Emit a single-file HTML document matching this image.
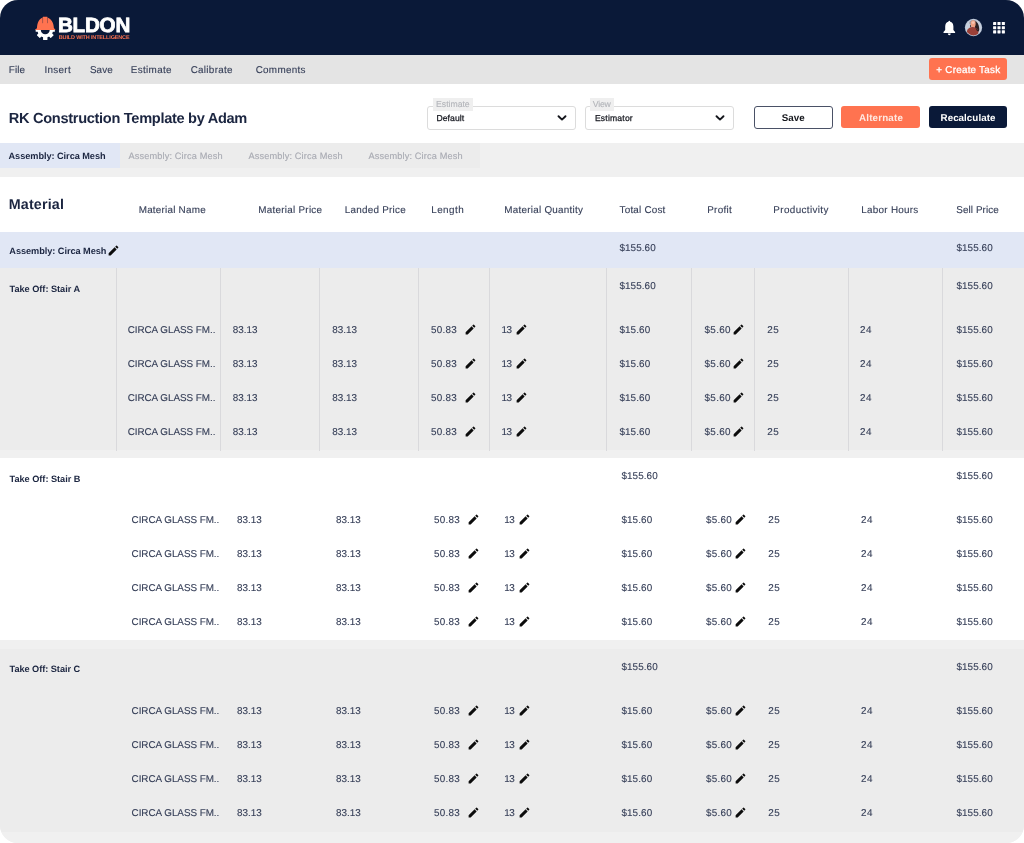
<!DOCTYPE html>
<html lang="en">
<head>
<meta charset="utf-8">
<title>BLDON - RK Construction Template by Adam</title>
<style>

html,body{margin:0;padding:0;background:#fff;}
body{width:1024px;height:843px;overflow:hidden;position:relative;font-family:"Liberation Sans",Arial,Helvetica,sans-serif;}
#app{will-change:transform;position:absolute;left:0;top:0;width:1024px;height:843px;overflow:hidden;border-radius:18px;background:#f0f0f0;}
.b{position:absolute;}
.t{position:absolute;white-space:nowrap;line-height:12px;height:12px;margin:0;padding:0;text-rendering:geometricPrecision;transform-origin:0 0;}
.pc{position:absolute;width:13px;height:13px;}
.vl{position:absolute;width:1px;background:#d9d9dc;top:268px;height:183px;}

</style>
</head>
<body>
<div id="app">
<header class="topbar">
<div class="b" style="left:0;top:0;width:1024px;height:55px;background:#0a1938"></div>
<svg class="b" style="left:34px;top:16px" width="23" height="26" viewBox="0 0 23 26">
<g fill="#ffffff"><circle cx="11.25" cy="13.6" r="7.9"/>
<g transform="translate(11.25 13.6)">
<rect x="-2.2" y="-10.4" width="4.4" height="20.8" rx="0.5"/>
<rect x="-2.2" y="-9.9" width="4.4" height="19.8" rx="0.5" transform="rotate(45)"/>
<rect x="-2.2" y="-9.6" width="4.4" height="19.2" rx="0.5" transform="rotate(90)"/>
<rect x="-2.2" y="-9.9" width="4.4" height="19.8" rx="0.5" transform="rotate(135)"/>
</g></g>
<circle cx="11.25" cy="13.7" r="4.5" fill="#0a1938"/>
<rect x="0" y="0" width="23" height="13.6" fill="#0a1938"/>
<path d="M1.4 13.9 L1.4 13.2 L3 12.3 C3 6.2 5.6 2.6 8.9 1.5 L8.9 0.8 L13.3 0.8 L13.3 1.5 C16.6 2.6 19.9 6.2 19.9 12.3 L21.2 13.2 L21.2 13.9 Z" fill="#ff7350"/>
<path d="M8.6 2 L8.6 7.2 M13.5 1.8 L13.5 7.2" stroke="#0a1938" stroke-width="0.45" fill="none" opacity="0.75"/>
</svg>
<svg class="b" style="left:942px;top:20px" width="15" height="16" viewBox="0 0 15 16">
<path d="M7.3 0.8 C7.9 0.8 8.2 1.2 8.2 1.8 C10.2 2.3 11.4 4 11.4 6.4 L11.4 10 L13.1 12 L13.1 12.9 L1.5 12.9 L1.5 12 L3.2 10 L3.2 6.4 C3.2 4 4.4 2.3 6.4 1.8 C6.4 1.2 6.7 0.8 7.3 0.8 Z" fill="#ffffff"/>
<path d="M5.9 13.6 L8.7 13.6 C8.7 14.6 8.1 15.2 7.3 15.2 C6.5 15.2 5.9 14.6 5.9 13.6 Z" fill="#ffffff"/></svg>
<svg class="b" style="left:963.95px;top:18.2px" width="19" height="19" viewBox="0 0 19 19">
<defs><clipPath id="av"><circle cx="9.5" cy="9.5" r="7.9"/></clipPath></defs>
<circle cx="9.5" cy="9.5" r="8.65" fill="#b7c2d4"/>
<g clip-path="url(#av)">
<rect x="0" y="0" width="19" height="19" fill="#c6cfdd"/>
<path d="M5.2 5.2 C5.6 3.2 7.2 2 9.4 2 C11.6 2 12.8 3 13.4 4.6 L12 6 L6.4 6.4 Z" fill="#7d6a68" opacity="0.55"/>
<path d="M10.8 3.2 C13.4 3.6 14.6 6 15 9 C15.3 11 15.6 12.4 14.6 13.4 L11.4 12 L10.6 8 Z" fill="#2b2023"/>
<path d="M6.2 6.6 C5.8 7.6 6 8.6 6.6 9.2 L7.4 8.4 Z" fill="#2b2023"/>
<ellipse cx="9.2" cy="5.8" rx="2.45" ry="3.5" fill="#f1a283"/>
<ellipse cx="9.1" cy="4.6" rx="1.5" ry="1.4" fill="#f7cdbd" opacity="0.8"/>
<path d="M2.6 18 L2.9 13.2 C3.2 10.6 5.8 9.3 8.4 9.1 C11.2 9 13.9 10.4 14.3 13.2 L14.6 18 Z" fill="#9b4038"/>
<path d="M11.2 9.4 C12.6 10.4 13.8 11.6 14.5 13.6 L13 13 Z" fill="#2b2023"/>
</g></svg>
<svg class="b" style="left:993px;top:22px" width="13" height="13" viewBox="0 0 13 13"><rect x="0.10" y="0.00" width="3.1" height="3.1" rx="0.4" fill="#ffffff"/><rect x="4.45" y="0.00" width="3.1" height="3.1" rx="0.4" fill="#ffffff"/><rect x="8.80" y="0.00" width="3.1" height="3.1" rx="0.4" fill="#ffffff"/><rect x="0.10" y="4.15" width="3.1" height="3.1" rx="0.4" fill="#ffffff"/><rect x="4.45" y="4.15" width="3.1" height="3.1" rx="0.4" fill="#ffffff"/><rect x="8.80" y="4.15" width="3.1" height="3.1" rx="0.4" fill="#ffffff"/><rect x="0.10" y="8.30" width="3.1" height="3.1" rx="0.4" fill="#ffffff"/><rect x="4.45" y="8.30" width="3.1" height="3.1" rx="0.4" fill="#ffffff"/><rect x="8.80" y="8.30" width="3.1" height="3.1" rx="0.4" fill="#ffffff"/></svg>
<span class="t" id="t0" style="left:57.94px;top:20px;font-size:20.6px;color:#ffffff;-webkit-text-stroke:0.8px #ffffff;font-weight:700;letter-spacing:-0.225px;">BLDON</span>
<span class="t" id="t1" style="left:58.79px;top:32px;font-size:5.5px;color:#ff7350;font-weight:700;letter-spacing:-0.157px;">BUILD WITH INTELLIGENCE</span>
</header>
<nav class="menubar">
<div class="b" style="left:0;top:55px;width:1024px;height:28.5px;background:#e4e4e4"></div>
<div class="b" style="left:929px;top:58.3px;width:78.3px;height:22.2px;border-radius:3px;background:#ff7350"></div>
<span class="t" id="t2" style="left:8.85px;top:65px;font-size:9.9px;color:#363f58;-webkit-text-stroke:0.12px #363f58;letter-spacing:0.100px;">File</span>
<span class="t" id="t3" style="left:44.44px;top:65px;font-size:9.9px;color:#363f58;-webkit-text-stroke:0.12px #363f58;letter-spacing:0.300px;">Insert</span>
<span class="t" id="t4" style="left:89.94px;top:65px;font-size:9.9px;color:#363f58;-webkit-text-stroke:0.12px #363f58;letter-spacing:0.083px;">Save</span>
<span class="t" id="t5" style="left:130.69px;top:65px;font-size:9.9px;color:#363f58;-webkit-text-stroke:0.12px #363f58;letter-spacing:0.357px;">Estimate</span>
<span class="t" id="t6" style="left:190.64px;top:65px;font-size:9.9px;color:#363f58;-webkit-text-stroke:0.12px #363f58;letter-spacing:0.300px;">Calibrate</span>
<span class="t" id="t7" style="left:255.64px;top:65px;font-size:9.9px;color:#363f58;-webkit-text-stroke:0.12px #363f58;letter-spacing:0.307px;">Comments</span>
<span class="t" id="t8" style="left:936.35px;top:65px;font-size:9.9px;color:#ffffff;-webkit-text-stroke:0.3px #ffffff;letter-spacing:0.229px;">+ Create Task</span>
</nav>
<section class="toolbar">
<div class="b" style="left:0;top:83.5px;width:1024px;height:59.5px;background:#ffffff"></div>
<div class="b" style="left:427px;top:106px;width:147px;height:21.5px;border:1px solid #dcdcdc;border-radius:3px;background:#fff"></div>
<div class="b" style="left:585px;top:106px;width:147px;height:21.5px;border:1px solid #dcdcdc;border-radius:3px;background:#fff"></div>
<div class="b" style="left:433px;top:98px;width:40px;height:13px;background:#efefef"></div>
<div class="b" style="left:590px;top:98px;width:24px;height:13px;background:#efefef"></div>
<div class="b" style="left:753.8px;top:106px;width:77.1px;height:20.8px;border:1px solid #4a5166;border-radius:3px;background:#fff"></div>
<div class="b" style="left:841.2px;top:106px;width:79px;height:22.3px;border-radius:3px;background:#ff7350"></div>
<div class="b" style="left:928.7px;top:106px;width:78.6px;height:22.3px;border-radius:3px;background:#0a1938"></div>
<svg class="b" style="left:557px;top:113px" width="10" height="10" viewBox="0 0 10 10"><path d="M1.5 3.2 L5 6.6 L8.5 3.2" fill="none" stroke="#14161c" stroke-width="1.9" stroke-linecap="round" stroke-linejoin="round"/></svg>
<svg class="b" style="left:715px;top:113px" width="10" height="10" viewBox="0 0 10 10"><path d="M1.5 3.2 L5 6.6 L8.5 3.2" fill="none" stroke="#14161c" stroke-width="1.9" stroke-linecap="round" stroke-linejoin="round"/></svg>
<span class="t" id="t9" style="left:8.75px;top:113px;font-size:14.6px;color:#1b2540;font-weight:700;letter-spacing:-0.308px;">RK Construction Template by Adam</span>
<span class="t" id="t10" style="left:436.10px;top:98px;font-size:8.7px;color:#b3b5ba;-webkit-text-stroke:0.12px #b3b5ba;letter-spacing:-0.029px;">Estimate</span>
<span class="t" id="t11" style="left:436.44px;top:112px;font-size:8.6px;color:#14161e;-webkit-text-stroke:0.25px #14161e;letter-spacing:0.083px;">Default</span>
<span class="t" id="t12" style="left:592.64px;top:98px;font-size:8.7px;color:#b3b5ba;-webkit-text-stroke:0.12px #b3b5ba;letter-spacing:-0.133px;">View</span>
<span class="t" id="t13" style="left:594.94px;top:112px;font-size:8.6px;color:#14161e;-webkit-text-stroke:0.25px #14161e;letter-spacing:0.188px;">Estimator</span>
<span class="t" id="t14" style="left:781.64px;top:113px;font-size:9.8px;color:#14161c;font-weight:700;letter-spacing:0.083px;">Save</span>
<span class="t" id="t15" style="left:859.00px;top:113px;font-size:9.8px;color:#ffe9e2;font-weight:700;letter-spacing:0.175px;">Alternate</span>
<span class="t" id="t16" style="left:940.54px;top:113px;font-size:9.8px;color:#ffffff;font-weight:700;letter-spacing:0.040px;">Recalculate</span>
</section>
<nav class="tabs">
<div class="b" style="left:0;top:143px;width:1024px;height:34px;background:#f0f0f0"></div>
<div class="b" style="left:0;top:143px;width:480px;height:25px;background:#ececec"></div>
<div class="b" style="left:0;top:143px;width:120px;height:25px;background:#e1e7f5"></div>
<span class="t" id="t17" style="left:8.50px;top:150px;font-size:9.2px;color:#1b2540;font-weight:700;letter-spacing:-0.050px;">Assembly: Circa Mesh</span>
<span class="t" id="t18" style="left:128.54px;top:150px;font-size:9.2px;color:#a8aab2;-webkit-text-stroke:0.12px #a8aab2;letter-spacing:0.137px;">Assembly: Circa Mesh</span>
<span class="t" id="t19" style="left:248.54px;top:150px;font-size:9.2px;color:#a8aab2;-webkit-text-stroke:0.12px #a8aab2;letter-spacing:0.137px;">Assembly: Circa Mesh</span>
<span class="t" id="t20" style="left:368.54px;top:150px;font-size:9.2px;color:#a8aab2;-webkit-text-stroke:0.12px #a8aab2;letter-spacing:0.137px;">Assembly: Circa Mesh</span>
</nav>
<main class="estimate-table">
<div class="thead">
<div class="b" style="left:0;top:177px;width:1024px;height:55px;background:#ffffff"></div>
<span class="t" id="t21" style="left:8.79px;top:199px;font-size:14.3px;color:#1b2540;font-weight:700;letter-spacing:0.150px;">Material</span>
<span class="t" id="t22" style="left:138.69px;top:205px;font-size:9.9px;color:#363f58;-webkit-text-stroke:0.12px #363f58;letter-spacing:0.229px;">Material Name</span>
<span class="t" id="t23" style="left:258.19px;top:205px;font-size:9.9px;color:#363f58;-webkit-text-stroke:0.12px #363f58;letter-spacing:0.269px;">Material Price</span>
<span class="t" id="t24" style="left:344.69px;top:205px;font-size:9.9px;color:#363f58;-webkit-text-stroke:0.12px #363f58;letter-spacing:0.250px;">Landed Price</span>
<span class="t" id="t25" style="left:431.19px;top:205px;font-size:9.9px;color:#363f58;-webkit-text-stroke:0.12px #363f58;letter-spacing:0.460px;">Length</span>
<span class="t" id="t26" style="left:504.35px;top:205px;font-size:9.9px;color:#363f58;-webkit-text-stroke:0.12px #363f58;letter-spacing:0.244px;">Material Quantity</span>
<span class="t" id="t27" style="left:619.54px;top:205px;font-size:9.9px;color:#363f58;-webkit-text-stroke:0.12px #363f58;letter-spacing:0.211px;">Total Cost</span>
<span class="t" id="t28" style="left:707.19px;top:205px;font-size:9.9px;color:#363f58;-webkit-text-stroke:0.12px #363f58;letter-spacing:0.300px;">Profit</span>
<span class="t" id="t29" style="left:773.35px;top:205px;font-size:9.9px;color:#363f58;-webkit-text-stroke:0.12px #363f58;letter-spacing:0.364px;">Productivity</span>
<span class="t" id="t30" style="left:861.35px;top:205px;font-size:9.9px;color:#363f58;-webkit-text-stroke:0.12px #363f58;letter-spacing:0.260px;">Labor Hours</span>
<span class="t" id="t31" style="left:956.29px;top:205px;font-size:9.9px;color:#363f58;-webkit-text-stroke:0.12px #363f58;letter-spacing:0.078px;">Sell Price</span>
</div>
<div class="assembly-row">
<div class="b" style="left:0;top:232px;width:1024px;height:36px;background:#e1e7f5"></div>
<svg class="pc" style="left:107.3px;top:243.7px" viewBox="0 0 24 24"><path fill="#0c0c0c" d="M3 17.25V21h3.75L17.81 9.94l-3.75-3.75L3 17.25zM20.71 7.04a.996.996 0 0 0 0-1.41l-2.34-2.34a.996.996 0 0 0-1.41 0l-1.83 1.83 3.75 3.75 1.83-1.83z"/></svg>
<span class="t" id="t32" style="left:9.30px;top:245px;font-size:9.2px;color:#1b2540;font-weight:700;letter-spacing:-0.050px;">Assembly: Circa Mesh</span>
<span class="t" id="t33" style="left:619.44px;top:243px;font-size:9.9px;color:#363f58;-webkit-text-stroke:0.12px #363f58;letter-spacing:0.083px;">$155.60</span>
<span class="t" id="t34" style="left:956.44px;top:243px;font-size:9.9px;color:#363f58;-webkit-text-stroke:0.12px #363f58;letter-spacing:0.083px;">$155.60</span>
</div>
<section class="takeoff stair-a">
<div class="b" style="left:0;top:268px;width:1024px;height:182px;background:#ececec"></div>
<div class="vl" style="left:116.0px"></div>
<div class="vl" style="left:220.0px"></div>
<div class="vl" style="left:319.0px"></div>
<div class="vl" style="left:418.0px"></div>
<div class="vl" style="left:489.0px"></div>
<div class="vl" style="left:606.0px"></div>
<div class="vl" style="left:691.0px"></div>
<div class="vl" style="left:754.0px"></div>
<div class="vl" style="left:848.0px"></div>
<div class="vl" style="left:942.0px"></div>
<svg class="pc" style="left:463.8px;top:322.8px" viewBox="0 0 24 24"><path fill="#0c0c0c" d="M3 17.25V21h3.75L17.81 9.94l-3.75-3.75L3 17.25zM20.71 7.04a.996.996 0 0 0 0-1.41l-2.34-2.34a.996.996 0 0 0-1.41 0l-1.83 1.83 3.75 3.75 1.83-1.83z"/></svg>
<svg class="pc" style="left:514.8px;top:322.8px" viewBox="0 0 24 24"><path fill="#0c0c0c" d="M3 17.25V21h3.75L17.81 9.94l-3.75-3.75L3 17.25zM20.71 7.04a.996.996 0 0 0 0-1.41l-2.34-2.34a.996.996 0 0 0-1.41 0l-1.83 1.83 3.75 3.75 1.83-1.83z"/></svg>
<svg class="pc" style="left:732.4px;top:322.8px" viewBox="0 0 24 24"><path fill="#0c0c0c" d="M3 17.25V21h3.75L17.81 9.94l-3.75-3.75L3 17.25zM20.71 7.04a.996.996 0 0 0 0-1.41l-2.34-2.34a.996.996 0 0 0-1.41 0l-1.83 1.83 3.75 3.75 1.83-1.83z"/></svg>
<svg class="pc" style="left:463.8px;top:356.8px" viewBox="0 0 24 24"><path fill="#0c0c0c" d="M3 17.25V21h3.75L17.81 9.94l-3.75-3.75L3 17.25zM20.71 7.04a.996.996 0 0 0 0-1.41l-2.34-2.34a.996.996 0 0 0-1.41 0l-1.83 1.83 3.75 3.75 1.83-1.83z"/></svg>
<svg class="pc" style="left:514.8px;top:356.8px" viewBox="0 0 24 24"><path fill="#0c0c0c" d="M3 17.25V21h3.75L17.81 9.94l-3.75-3.75L3 17.25zM20.71 7.04a.996.996 0 0 0 0-1.41l-2.34-2.34a.996.996 0 0 0-1.41 0l-1.83 1.83 3.75 3.75 1.83-1.83z"/></svg>
<svg class="pc" style="left:732.4px;top:356.8px" viewBox="0 0 24 24"><path fill="#0c0c0c" d="M3 17.25V21h3.75L17.81 9.94l-3.75-3.75L3 17.25zM20.71 7.04a.996.996 0 0 0 0-1.41l-2.34-2.34a.996.996 0 0 0-1.41 0l-1.83 1.83 3.75 3.75 1.83-1.83z"/></svg>
<svg class="pc" style="left:463.8px;top:390.8px" viewBox="0 0 24 24"><path fill="#0c0c0c" d="M3 17.25V21h3.75L17.81 9.94l-3.75-3.75L3 17.25zM20.71 7.04a.996.996 0 0 0 0-1.41l-2.34-2.34a.996.996 0 0 0-1.41 0l-1.83 1.83 3.75 3.75 1.83-1.83z"/></svg>
<svg class="pc" style="left:514.8px;top:390.8px" viewBox="0 0 24 24"><path fill="#0c0c0c" d="M3 17.25V21h3.75L17.81 9.94l-3.75-3.75L3 17.25zM20.71 7.04a.996.996 0 0 0 0-1.41l-2.34-2.34a.996.996 0 0 0-1.41 0l-1.83 1.83 3.75 3.75 1.83-1.83z"/></svg>
<svg class="pc" style="left:732.4px;top:390.8px" viewBox="0 0 24 24"><path fill="#0c0c0c" d="M3 17.25V21h3.75L17.81 9.94l-3.75-3.75L3 17.25zM20.71 7.04a.996.996 0 0 0 0-1.41l-2.34-2.34a.996.996 0 0 0-1.41 0l-1.83 1.83 3.75 3.75 1.83-1.83z"/></svg>
<svg class="pc" style="left:463.8px;top:424.8px" viewBox="0 0 24 24"><path fill="#0c0c0c" d="M3 17.25V21h3.75L17.81 9.94l-3.75-3.75L3 17.25zM20.71 7.04a.996.996 0 0 0 0-1.41l-2.34-2.34a.996.996 0 0 0-1.41 0l-1.83 1.83 3.75 3.75 1.83-1.83z"/></svg>
<svg class="pc" style="left:514.8px;top:424.8px" viewBox="0 0 24 24"><path fill="#0c0c0c" d="M3 17.25V21h3.75L17.81 9.94l-3.75-3.75L3 17.25zM20.71 7.04a.996.996 0 0 0 0-1.41l-2.34-2.34a.996.996 0 0 0-1.41 0l-1.83 1.83 3.75 3.75 1.83-1.83z"/></svg>
<svg class="pc" style="left:732.4px;top:424.8px" viewBox="0 0 24 24"><path fill="#0c0c0c" d="M3 17.25V21h3.75L17.81 9.94l-3.75-3.75L3 17.25zM20.71 7.04a.996.996 0 0 0 0-1.41l-2.34-2.34a.996.996 0 0 0-1.41 0l-1.83 1.83 3.75 3.75 1.83-1.83z"/></svg>
<span class="t" id="t35" style="left:9.54px;top:283px;font-size:9.2px;color:#1b2540;font-weight:700;letter-spacing:-0.028px;">Take Off: Stair A</span>
<span class="t" id="t36" style="left:619.44px;top:281px;font-size:9.9px;color:#363f58;-webkit-text-stroke:0.12px #363f58;letter-spacing:0.083px;">$155.60</span>
<span class="t" id="t37" style="left:956.44px;top:281px;font-size:9.9px;color:#363f58;-webkit-text-stroke:0.12px #363f58;letter-spacing:0.083px;">$155.60</span>
<span class="t" id="t38" style="left:127.64px;top:325px;font-size:9.9px;color:#363f58;-webkit-text-stroke:0.12px #363f58;letter-spacing:-0.037px;">CIRCA GLASS FM..</span>
<span class="t" id="t39" style="left:232.79px;top:325px;font-size:9.9px;color:#363f58;-webkit-text-stroke:0.12px #363f58;letter-spacing:0.025px;">83.13</span>
<span class="t" id="t40" style="left:332.29px;top:325px;font-size:9.9px;color:#363f58;-webkit-text-stroke:0.12px #363f58;letter-spacing:0.025px;">83.13</span>
<span class="t" id="t41" style="left:430.94px;top:325px;font-size:9.9px;color:#363f58;-webkit-text-stroke:0.12px #363f58;letter-spacing:0.300px;">50.83</span>
<span class="t" id="t42" style="left:501.54px;top:325px;font-size:9.9px;color:#363f58;-webkit-text-stroke:0.12px #363f58;letter-spacing:-0.400px;">13</span>
<span class="t" id="t43" style="left:619.44px;top:325px;font-size:9.9px;color:#363f58;-webkit-text-stroke:0.12px #363f58;letter-spacing:0.100px;">$15.60</span>
<span class="t" id="t44" style="left:704.60px;top:325px;font-size:9.9px;color:#363f58;-webkit-text-stroke:0.12px #363f58;letter-spacing:0.275px;">$5.60</span>
<span class="t" id="t45" style="left:767.29px;top:325px;font-size:9.9px;color:#363f58;-webkit-text-stroke:0.12px #363f58;letter-spacing:0.550px;">25</span>
<span class="t" id="t46" style="left:860.10px;top:325px;font-size:9.9px;color:#363f58;-webkit-text-stroke:0.12px #363f58;letter-spacing:0.500px;">24</span>
<span class="t" id="t47" style="left:956.44px;top:325px;font-size:9.9px;color:#363f58;-webkit-text-stroke:0.12px #363f58;letter-spacing:0.083px;">$155.60</span>
<span class="t" id="t48" style="left:127.64px;top:359px;font-size:9.9px;color:#363f58;-webkit-text-stroke:0.12px #363f58;letter-spacing:-0.037px;">CIRCA GLASS FM..</span>
<span class="t" id="t49" style="left:232.79px;top:359px;font-size:9.9px;color:#363f58;-webkit-text-stroke:0.12px #363f58;letter-spacing:0.025px;">83.13</span>
<span class="t" id="t50" style="left:332.29px;top:359px;font-size:9.9px;color:#363f58;-webkit-text-stroke:0.12px #363f58;letter-spacing:0.025px;">83.13</span>
<span class="t" id="t51" style="left:430.94px;top:359px;font-size:9.9px;color:#363f58;-webkit-text-stroke:0.12px #363f58;letter-spacing:0.300px;">50.83</span>
<span class="t" id="t52" style="left:501.54px;top:359px;font-size:9.9px;color:#363f58;-webkit-text-stroke:0.12px #363f58;letter-spacing:-0.400px;">13</span>
<span class="t" id="t53" style="left:619.44px;top:359px;font-size:9.9px;color:#363f58;-webkit-text-stroke:0.12px #363f58;letter-spacing:0.100px;">$15.60</span>
<span class="t" id="t54" style="left:704.60px;top:359px;font-size:9.9px;color:#363f58;-webkit-text-stroke:0.12px #363f58;letter-spacing:0.275px;">$5.60</span>
<span class="t" id="t55" style="left:767.29px;top:359px;font-size:9.9px;color:#363f58;-webkit-text-stroke:0.12px #363f58;letter-spacing:0.550px;">25</span>
<span class="t" id="t56" style="left:860.10px;top:359px;font-size:9.9px;color:#363f58;-webkit-text-stroke:0.12px #363f58;letter-spacing:0.500px;">24</span>
<span class="t" id="t57" style="left:956.44px;top:359px;font-size:9.9px;color:#363f58;-webkit-text-stroke:0.12px #363f58;letter-spacing:0.083px;">$155.60</span>
<span class="t" id="t58" style="left:127.64px;top:393px;font-size:9.9px;color:#363f58;-webkit-text-stroke:0.12px #363f58;letter-spacing:-0.037px;">CIRCA GLASS FM..</span>
<span class="t" id="t59" style="left:232.79px;top:393px;font-size:9.9px;color:#363f58;-webkit-text-stroke:0.12px #363f58;letter-spacing:0.025px;">83.13</span>
<span class="t" id="t60" style="left:332.29px;top:393px;font-size:9.9px;color:#363f58;-webkit-text-stroke:0.12px #363f58;letter-spacing:0.025px;">83.13</span>
<span class="t" id="t61" style="left:430.94px;top:393px;font-size:9.9px;color:#363f58;-webkit-text-stroke:0.12px #363f58;letter-spacing:0.300px;">50.83</span>
<span class="t" id="t62" style="left:501.54px;top:393px;font-size:9.9px;color:#363f58;-webkit-text-stroke:0.12px #363f58;letter-spacing:-0.400px;">13</span>
<span class="t" id="t63" style="left:619.44px;top:393px;font-size:9.9px;color:#363f58;-webkit-text-stroke:0.12px #363f58;letter-spacing:0.100px;">$15.60</span>
<span class="t" id="t64" style="left:704.60px;top:393px;font-size:9.9px;color:#363f58;-webkit-text-stroke:0.12px #363f58;letter-spacing:0.275px;">$5.60</span>
<span class="t" id="t65" style="left:767.29px;top:393px;font-size:9.9px;color:#363f58;-webkit-text-stroke:0.12px #363f58;letter-spacing:0.550px;">25</span>
<span class="t" id="t66" style="left:860.10px;top:393px;font-size:9.9px;color:#363f58;-webkit-text-stroke:0.12px #363f58;letter-spacing:0.500px;">24</span>
<span class="t" id="t67" style="left:956.44px;top:393px;font-size:9.9px;color:#363f58;-webkit-text-stroke:0.12px #363f58;letter-spacing:0.083px;">$155.60</span>
<span class="t" id="t68" style="left:127.64px;top:427px;font-size:9.9px;color:#363f58;-webkit-text-stroke:0.12px #363f58;letter-spacing:-0.037px;">CIRCA GLASS FM..</span>
<span class="t" id="t69" style="left:232.79px;top:427px;font-size:9.9px;color:#363f58;-webkit-text-stroke:0.12px #363f58;letter-spacing:0.025px;">83.13</span>
<span class="t" id="t70" style="left:332.29px;top:427px;font-size:9.9px;color:#363f58;-webkit-text-stroke:0.12px #363f58;letter-spacing:0.025px;">83.13</span>
<span class="t" id="t71" style="left:430.94px;top:427px;font-size:9.9px;color:#363f58;-webkit-text-stroke:0.12px #363f58;letter-spacing:0.300px;">50.83</span>
<span class="t" id="t72" style="left:501.54px;top:427px;font-size:9.9px;color:#363f58;-webkit-text-stroke:0.12px #363f58;letter-spacing:-0.400px;">13</span>
<span class="t" id="t73" style="left:619.44px;top:427px;font-size:9.9px;color:#363f58;-webkit-text-stroke:0.12px #363f58;letter-spacing:0.100px;">$15.60</span>
<span class="t" id="t74" style="left:704.60px;top:427px;font-size:9.9px;color:#363f58;-webkit-text-stroke:0.12px #363f58;letter-spacing:0.275px;">$5.60</span>
<span class="t" id="t75" style="left:767.29px;top:427px;font-size:9.9px;color:#363f58;-webkit-text-stroke:0.12px #363f58;letter-spacing:0.550px;">25</span>
<span class="t" id="t76" style="left:860.10px;top:427px;font-size:9.9px;color:#363f58;-webkit-text-stroke:0.12px #363f58;letter-spacing:0.500px;">24</span>
<span class="t" id="t77" style="left:956.44px;top:427px;font-size:9.9px;color:#363f58;-webkit-text-stroke:0.12px #363f58;letter-spacing:0.083px;">$155.60</span>
</section>
<section class="takeoff stair-b">
<div class="b" style="left:0;top:458px;width:1024px;height:182px;background:#ffffff"></div>
<svg class="pc" style="left:467.1px;top:513.0px" viewBox="0 0 24 24"><path fill="#0c0c0c" d="M3 17.25V21h3.75L17.81 9.94l-3.75-3.75L3 17.25zM20.71 7.04a.996.996 0 0 0 0-1.41l-2.34-2.34a.996.996 0 0 0-1.41 0l-1.83 1.83 3.75 3.75 1.83-1.83z"/></svg>
<svg class="pc" style="left:517.8px;top:513.0px" viewBox="0 0 24 24"><path fill="#0c0c0c" d="M3 17.25V21h3.75L17.81 9.94l-3.75-3.75L3 17.25zM20.71 7.04a.996.996 0 0 0 0-1.41l-2.34-2.34a.996.996 0 0 0-1.41 0l-1.83 1.83 3.75 3.75 1.83-1.83z"/></svg>
<svg class="pc" style="left:733.8px;top:513.0px" viewBox="0 0 24 24"><path fill="#0c0c0c" d="M3 17.25V21h3.75L17.81 9.94l-3.75-3.75L3 17.25zM20.71 7.04a.996.996 0 0 0 0-1.41l-2.34-2.34a.996.996 0 0 0-1.41 0l-1.83 1.83 3.75 3.75 1.83-1.83z"/></svg>
<svg class="pc" style="left:467.1px;top:547.0px" viewBox="0 0 24 24"><path fill="#0c0c0c" d="M3 17.25V21h3.75L17.81 9.94l-3.75-3.75L3 17.25zM20.71 7.04a.996.996 0 0 0 0-1.41l-2.34-2.34a.996.996 0 0 0-1.41 0l-1.83 1.83 3.75 3.75 1.83-1.83z"/></svg>
<svg class="pc" style="left:517.8px;top:547.0px" viewBox="0 0 24 24"><path fill="#0c0c0c" d="M3 17.25V21h3.75L17.81 9.94l-3.75-3.75L3 17.25zM20.71 7.04a.996.996 0 0 0 0-1.41l-2.34-2.34a.996.996 0 0 0-1.41 0l-1.83 1.83 3.75 3.75 1.83-1.83z"/></svg>
<svg class="pc" style="left:733.8px;top:547.0px" viewBox="0 0 24 24"><path fill="#0c0c0c" d="M3 17.25V21h3.75L17.81 9.94l-3.75-3.75L3 17.25zM20.71 7.04a.996.996 0 0 0 0-1.41l-2.34-2.34a.996.996 0 0 0-1.41 0l-1.83 1.83 3.75 3.75 1.83-1.83z"/></svg>
<svg class="pc" style="left:467.1px;top:581.0px" viewBox="0 0 24 24"><path fill="#0c0c0c" d="M3 17.25V21h3.75L17.81 9.94l-3.75-3.75L3 17.25zM20.71 7.04a.996.996 0 0 0 0-1.41l-2.34-2.34a.996.996 0 0 0-1.41 0l-1.83 1.83 3.75 3.75 1.83-1.83z"/></svg>
<svg class="pc" style="left:517.8px;top:581.0px" viewBox="0 0 24 24"><path fill="#0c0c0c" d="M3 17.25V21h3.75L17.81 9.94l-3.75-3.75L3 17.25zM20.71 7.04a.996.996 0 0 0 0-1.41l-2.34-2.34a.996.996 0 0 0-1.41 0l-1.83 1.83 3.75 3.75 1.83-1.83z"/></svg>
<svg class="pc" style="left:733.8px;top:581.0px" viewBox="0 0 24 24"><path fill="#0c0c0c" d="M3 17.25V21h3.75L17.81 9.94l-3.75-3.75L3 17.25zM20.71 7.04a.996.996 0 0 0 0-1.41l-2.34-2.34a.996.996 0 0 0-1.41 0l-1.83 1.83 3.75 3.75 1.83-1.83z"/></svg>
<svg class="pc" style="left:467.1px;top:615.0px" viewBox="0 0 24 24"><path fill="#0c0c0c" d="M3 17.25V21h3.75L17.81 9.94l-3.75-3.75L3 17.25zM20.71 7.04a.996.996 0 0 0 0-1.41l-2.34-2.34a.996.996 0 0 0-1.41 0l-1.83 1.83 3.75 3.75 1.83-1.83z"/></svg>
<svg class="pc" style="left:517.8px;top:615.0px" viewBox="0 0 24 24"><path fill="#0c0c0c" d="M3 17.25V21h3.75L17.81 9.94l-3.75-3.75L3 17.25zM20.71 7.04a.996.996 0 0 0 0-1.41l-2.34-2.34a.996.996 0 0 0-1.41 0l-1.83 1.83 3.75 3.75 1.83-1.83z"/></svg>
<svg class="pc" style="left:733.8px;top:615.0px" viewBox="0 0 24 24"><path fill="#0c0c0c" d="M3 17.25V21h3.75L17.81 9.94l-3.75-3.75L3 17.25zM20.71 7.04a.996.996 0 0 0 0-1.41l-2.34-2.34a.996.996 0 0 0-1.41 0l-1.83 1.83 3.75 3.75 1.83-1.83z"/></svg>
<span class="t" id="t78" style="left:9.54px;top:473px;font-size:9.2px;color:#1b2540;font-weight:700;letter-spacing:-0.028px;">Take Off: Stair B</span>
<span class="t" id="t79" style="left:621.44px;top:471px;font-size:9.9px;color:#363f58;-webkit-text-stroke:0.12px #363f58;letter-spacing:0.083px;">$155.60</span>
<span class="t" id="t80" style="left:956.44px;top:471px;font-size:9.9px;color:#363f58;-webkit-text-stroke:0.12px #363f58;letter-spacing:0.083px;">$155.60</span>
<span class="t" id="t81" style="left:131.54px;top:515px;font-size:9.9px;color:#363f58;-webkit-text-stroke:0.12px #363f58;letter-spacing:-0.037px;">CIRCA GLASS FM..</span>
<span class="t" id="t82" style="left:236.99px;top:515px;font-size:9.9px;color:#363f58;-webkit-text-stroke:0.12px #363f58;letter-spacing:0.025px;">83.13</span>
<span class="t" id="t83" style="left:335.99px;top:515px;font-size:9.9px;color:#363f58;-webkit-text-stroke:0.12px #363f58;letter-spacing:0.025px;">83.13</span>
<span class="t" id="t84" style="left:433.94px;top:515px;font-size:9.9px;color:#363f58;-webkit-text-stroke:0.12px #363f58;letter-spacing:0.300px;">50.83</span>
<span class="t" id="t85" style="left:504.24px;top:515px;font-size:9.9px;color:#363f58;-webkit-text-stroke:0.12px #363f58;letter-spacing:-0.400px;">13</span>
<span class="t" id="t86" style="left:621.44px;top:515px;font-size:9.9px;color:#363f58;-webkit-text-stroke:0.12px #363f58;letter-spacing:0.100px;">$15.60</span>
<span class="t" id="t87" style="left:706.00px;top:515px;font-size:9.9px;color:#363f58;-webkit-text-stroke:0.12px #363f58;letter-spacing:0.275px;">$5.60</span>
<span class="t" id="t88" style="left:768.29px;top:515px;font-size:9.9px;color:#363f58;-webkit-text-stroke:0.12px #363f58;letter-spacing:0.550px;">25</span>
<span class="t" id="t89" style="left:861.10px;top:515px;font-size:9.9px;color:#363f58;-webkit-text-stroke:0.12px #363f58;letter-spacing:0.500px;">24</span>
<span class="t" id="t90" style="left:956.44px;top:515px;font-size:9.9px;color:#363f58;-webkit-text-stroke:0.12px #363f58;letter-spacing:0.083px;">$155.60</span>
<span class="t" id="t91" style="left:131.54px;top:549px;font-size:9.9px;color:#363f58;-webkit-text-stroke:0.12px #363f58;letter-spacing:-0.037px;">CIRCA GLASS FM..</span>
<span class="t" id="t92" style="left:236.99px;top:549px;font-size:9.9px;color:#363f58;-webkit-text-stroke:0.12px #363f58;letter-spacing:0.025px;">83.13</span>
<span class="t" id="t93" style="left:335.99px;top:549px;font-size:9.9px;color:#363f58;-webkit-text-stroke:0.12px #363f58;letter-spacing:0.025px;">83.13</span>
<span class="t" id="t94" style="left:433.94px;top:549px;font-size:9.9px;color:#363f58;-webkit-text-stroke:0.12px #363f58;letter-spacing:0.300px;">50.83</span>
<span class="t" id="t95" style="left:504.24px;top:549px;font-size:9.9px;color:#363f58;-webkit-text-stroke:0.12px #363f58;letter-spacing:-0.400px;">13</span>
<span class="t" id="t96" style="left:621.44px;top:549px;font-size:9.9px;color:#363f58;-webkit-text-stroke:0.12px #363f58;letter-spacing:0.100px;">$15.60</span>
<span class="t" id="t97" style="left:706.00px;top:549px;font-size:9.9px;color:#363f58;-webkit-text-stroke:0.12px #363f58;letter-spacing:0.275px;">$5.60</span>
<span class="t" id="t98" style="left:768.29px;top:549px;font-size:9.9px;color:#363f58;-webkit-text-stroke:0.12px #363f58;letter-spacing:0.550px;">25</span>
<span class="t" id="t99" style="left:861.10px;top:549px;font-size:9.9px;color:#363f58;-webkit-text-stroke:0.12px #363f58;letter-spacing:0.500px;">24</span>
<span class="t" id="t100" style="left:956.44px;top:549px;font-size:9.9px;color:#363f58;-webkit-text-stroke:0.12px #363f58;letter-spacing:0.083px;">$155.60</span>
<span class="t" id="t101" style="left:131.54px;top:583px;font-size:9.9px;color:#363f58;-webkit-text-stroke:0.12px #363f58;letter-spacing:-0.037px;">CIRCA GLASS FM..</span>
<span class="t" id="t102" style="left:236.99px;top:583px;font-size:9.9px;color:#363f58;-webkit-text-stroke:0.12px #363f58;letter-spacing:0.025px;">83.13</span>
<span class="t" id="t103" style="left:335.99px;top:583px;font-size:9.9px;color:#363f58;-webkit-text-stroke:0.12px #363f58;letter-spacing:0.025px;">83.13</span>
<span class="t" id="t104" style="left:433.94px;top:583px;font-size:9.9px;color:#363f58;-webkit-text-stroke:0.12px #363f58;letter-spacing:0.300px;">50.83</span>
<span class="t" id="t105" style="left:504.24px;top:583px;font-size:9.9px;color:#363f58;-webkit-text-stroke:0.12px #363f58;letter-spacing:-0.400px;">13</span>
<span class="t" id="t106" style="left:621.44px;top:583px;font-size:9.9px;color:#363f58;-webkit-text-stroke:0.12px #363f58;letter-spacing:0.100px;">$15.60</span>
<span class="t" id="t107" style="left:706.00px;top:583px;font-size:9.9px;color:#363f58;-webkit-text-stroke:0.12px #363f58;letter-spacing:0.275px;">$5.60</span>
<span class="t" id="t108" style="left:768.29px;top:583px;font-size:9.9px;color:#363f58;-webkit-text-stroke:0.12px #363f58;letter-spacing:0.550px;">25</span>
<span class="t" id="t109" style="left:861.10px;top:583px;font-size:9.9px;color:#363f58;-webkit-text-stroke:0.12px #363f58;letter-spacing:0.500px;">24</span>
<span class="t" id="t110" style="left:956.44px;top:583px;font-size:9.9px;color:#363f58;-webkit-text-stroke:0.12px #363f58;letter-spacing:0.083px;">$155.60</span>
<span class="t" id="t111" style="left:131.54px;top:617px;font-size:9.9px;color:#363f58;-webkit-text-stroke:0.12px #363f58;letter-spacing:-0.037px;">CIRCA GLASS FM..</span>
<span class="t" id="t112" style="left:236.99px;top:617px;font-size:9.9px;color:#363f58;-webkit-text-stroke:0.12px #363f58;letter-spacing:0.025px;">83.13</span>
<span class="t" id="t113" style="left:335.99px;top:617px;font-size:9.9px;color:#363f58;-webkit-text-stroke:0.12px #363f58;letter-spacing:0.025px;">83.13</span>
<span class="t" id="t114" style="left:433.94px;top:617px;font-size:9.9px;color:#363f58;-webkit-text-stroke:0.12px #363f58;letter-spacing:0.300px;">50.83</span>
<span class="t" id="t115" style="left:504.24px;top:617px;font-size:9.9px;color:#363f58;-webkit-text-stroke:0.12px #363f58;letter-spacing:-0.400px;">13</span>
<span class="t" id="t116" style="left:621.44px;top:617px;font-size:9.9px;color:#363f58;-webkit-text-stroke:0.12px #363f58;letter-spacing:0.100px;">$15.60</span>
<span class="t" id="t117" style="left:706.00px;top:617px;font-size:9.9px;color:#363f58;-webkit-text-stroke:0.12px #363f58;letter-spacing:0.275px;">$5.60</span>
<span class="t" id="t118" style="left:768.29px;top:617px;font-size:9.9px;color:#363f58;-webkit-text-stroke:0.12px #363f58;letter-spacing:0.550px;">25</span>
<span class="t" id="t119" style="left:861.10px;top:617px;font-size:9.9px;color:#363f58;-webkit-text-stroke:0.12px #363f58;letter-spacing:0.500px;">24</span>
<span class="t" id="t120" style="left:956.44px;top:617px;font-size:9.9px;color:#363f58;-webkit-text-stroke:0.12px #363f58;letter-spacing:0.083px;">$155.60</span>
</section>
<section class="takeoff stair-c">
<div class="b" style="left:0;top:649px;width:1024px;height:183px;background:#ececec"></div>
<div class="b" style="left:0;top:832px;width:1024px;height:11px;background:#f0f0f0"></div>
<svg class="pc" style="left:467.1px;top:703.7px" viewBox="0 0 24 24"><path fill="#0c0c0c" d="M3 17.25V21h3.75L17.81 9.94l-3.75-3.75L3 17.25zM20.71 7.04a.996.996 0 0 0 0-1.41l-2.34-2.34a.996.996 0 0 0-1.41 0l-1.83 1.83 3.75 3.75 1.83-1.83z"/></svg>
<svg class="pc" style="left:517.8px;top:703.7px" viewBox="0 0 24 24"><path fill="#0c0c0c" d="M3 17.25V21h3.75L17.81 9.94l-3.75-3.75L3 17.25zM20.71 7.04a.996.996 0 0 0 0-1.41l-2.34-2.34a.996.996 0 0 0-1.41 0l-1.83 1.83 3.75 3.75 1.83-1.83z"/></svg>
<svg class="pc" style="left:733.8px;top:703.7px" viewBox="0 0 24 24"><path fill="#0c0c0c" d="M3 17.25V21h3.75L17.81 9.94l-3.75-3.75L3 17.25zM20.71 7.04a.996.996 0 0 0 0-1.41l-2.34-2.34a.996.996 0 0 0-1.41 0l-1.83 1.83 3.75 3.75 1.83-1.83z"/></svg>
<svg class="pc" style="left:467.1px;top:737.7px" viewBox="0 0 24 24"><path fill="#0c0c0c" d="M3 17.25V21h3.75L17.81 9.94l-3.75-3.75L3 17.25zM20.71 7.04a.996.996 0 0 0 0-1.41l-2.34-2.34a.996.996 0 0 0-1.41 0l-1.83 1.83 3.75 3.75 1.83-1.83z"/></svg>
<svg class="pc" style="left:517.8px;top:737.7px" viewBox="0 0 24 24"><path fill="#0c0c0c" d="M3 17.25V21h3.75L17.81 9.94l-3.75-3.75L3 17.25zM20.71 7.04a.996.996 0 0 0 0-1.41l-2.34-2.34a.996.996 0 0 0-1.41 0l-1.83 1.83 3.75 3.75 1.83-1.83z"/></svg>
<svg class="pc" style="left:733.8px;top:737.7px" viewBox="0 0 24 24"><path fill="#0c0c0c" d="M3 17.25V21h3.75L17.81 9.94l-3.75-3.75L3 17.25zM20.71 7.04a.996.996 0 0 0 0-1.41l-2.34-2.34a.996.996 0 0 0-1.41 0l-1.83 1.83 3.75 3.75 1.83-1.83z"/></svg>
<svg class="pc" style="left:467.1px;top:771.7px" viewBox="0 0 24 24"><path fill="#0c0c0c" d="M3 17.25V21h3.75L17.81 9.94l-3.75-3.75L3 17.25zM20.71 7.04a.996.996 0 0 0 0-1.41l-2.34-2.34a.996.996 0 0 0-1.41 0l-1.83 1.83 3.75 3.75 1.83-1.83z"/></svg>
<svg class="pc" style="left:517.8px;top:771.7px" viewBox="0 0 24 24"><path fill="#0c0c0c" d="M3 17.25V21h3.75L17.81 9.94l-3.75-3.75L3 17.25zM20.71 7.04a.996.996 0 0 0 0-1.41l-2.34-2.34a.996.996 0 0 0-1.41 0l-1.83 1.83 3.75 3.75 1.83-1.83z"/></svg>
<svg class="pc" style="left:733.8px;top:771.7px" viewBox="0 0 24 24"><path fill="#0c0c0c" d="M3 17.25V21h3.75L17.81 9.94l-3.75-3.75L3 17.25zM20.71 7.04a.996.996 0 0 0 0-1.41l-2.34-2.34a.996.996 0 0 0-1.41 0l-1.83 1.83 3.75 3.75 1.83-1.83z"/></svg>
<svg class="pc" style="left:467.1px;top:805.7px" viewBox="0 0 24 24"><path fill="#0c0c0c" d="M3 17.25V21h3.75L17.81 9.94l-3.75-3.75L3 17.25zM20.71 7.04a.996.996 0 0 0 0-1.41l-2.34-2.34a.996.996 0 0 0-1.41 0l-1.83 1.83 3.75 3.75 1.83-1.83z"/></svg>
<svg class="pc" style="left:517.8px;top:805.7px" viewBox="0 0 24 24"><path fill="#0c0c0c" d="M3 17.25V21h3.75L17.81 9.94l-3.75-3.75L3 17.25zM20.71 7.04a.996.996 0 0 0 0-1.41l-2.34-2.34a.996.996 0 0 0-1.41 0l-1.83 1.83 3.75 3.75 1.83-1.83z"/></svg>
<svg class="pc" style="left:733.8px;top:805.7px" viewBox="0 0 24 24"><path fill="#0c0c0c" d="M3 17.25V21h3.75L17.81 9.94l-3.75-3.75L3 17.25zM20.71 7.04a.996.996 0 0 0 0-1.41l-2.34-2.34a.996.996 0 0 0-1.41 0l-1.83 1.83 3.75 3.75 1.83-1.83z"/></svg>
<span class="t" id="t121" style="left:9.54px;top:663px;font-size:9.2px;color:#1b2540;font-weight:700;letter-spacing:-0.044px;">Take Off: Stair C</span>
<span class="t" id="t122" style="left:621.44px;top:662px;font-size:9.9px;color:#363f58;-webkit-text-stroke:0.12px #363f58;letter-spacing:0.083px;">$155.60</span>
<span class="t" id="t123" style="left:956.44px;top:662px;font-size:9.9px;color:#363f58;-webkit-text-stroke:0.12px #363f58;letter-spacing:0.083px;">$155.60</span>
<span class="t" id="t124" style="left:131.54px;top:706px;font-size:9.9px;color:#363f58;-webkit-text-stroke:0.12px #363f58;letter-spacing:-0.037px;">CIRCA GLASS FM..</span>
<span class="t" id="t125" style="left:236.99px;top:706px;font-size:9.9px;color:#363f58;-webkit-text-stroke:0.12px #363f58;letter-spacing:0.025px;">83.13</span>
<span class="t" id="t126" style="left:335.99px;top:706px;font-size:9.9px;color:#363f58;-webkit-text-stroke:0.12px #363f58;letter-spacing:0.025px;">83.13</span>
<span class="t" id="t127" style="left:433.94px;top:706px;font-size:9.9px;color:#363f58;-webkit-text-stroke:0.12px #363f58;letter-spacing:0.300px;">50.83</span>
<span class="t" id="t128" style="left:504.24px;top:706px;font-size:9.9px;color:#363f58;-webkit-text-stroke:0.12px #363f58;letter-spacing:-0.400px;">13</span>
<span class="t" id="t129" style="left:621.44px;top:706px;font-size:9.9px;color:#363f58;-webkit-text-stroke:0.12px #363f58;letter-spacing:0.100px;">$15.60</span>
<span class="t" id="t130" style="left:706.00px;top:706px;font-size:9.9px;color:#363f58;-webkit-text-stroke:0.12px #363f58;letter-spacing:0.275px;">$5.60</span>
<span class="t" id="t131" style="left:768.29px;top:706px;font-size:9.9px;color:#363f58;-webkit-text-stroke:0.12px #363f58;letter-spacing:0.550px;">25</span>
<span class="t" id="t132" style="left:861.10px;top:706px;font-size:9.9px;color:#363f58;-webkit-text-stroke:0.12px #363f58;letter-spacing:0.500px;">24</span>
<span class="t" id="t133" style="left:956.44px;top:706px;font-size:9.9px;color:#363f58;-webkit-text-stroke:0.12px #363f58;letter-spacing:0.083px;">$155.60</span>
<span class="t" id="t134" style="left:131.54px;top:740px;font-size:9.9px;color:#363f58;-webkit-text-stroke:0.12px #363f58;letter-spacing:-0.037px;">CIRCA GLASS FM..</span>
<span class="t" id="t135" style="left:236.99px;top:740px;font-size:9.9px;color:#363f58;-webkit-text-stroke:0.12px #363f58;letter-spacing:0.025px;">83.13</span>
<span class="t" id="t136" style="left:335.99px;top:740px;font-size:9.9px;color:#363f58;-webkit-text-stroke:0.12px #363f58;letter-spacing:0.025px;">83.13</span>
<span class="t" id="t137" style="left:433.94px;top:740px;font-size:9.9px;color:#363f58;-webkit-text-stroke:0.12px #363f58;letter-spacing:0.300px;">50.83</span>
<span class="t" id="t138" style="left:504.24px;top:740px;font-size:9.9px;color:#363f58;-webkit-text-stroke:0.12px #363f58;letter-spacing:-0.400px;">13</span>
<span class="t" id="t139" style="left:621.44px;top:740px;font-size:9.9px;color:#363f58;-webkit-text-stroke:0.12px #363f58;letter-spacing:0.100px;">$15.60</span>
<span class="t" id="t140" style="left:706.00px;top:740px;font-size:9.9px;color:#363f58;-webkit-text-stroke:0.12px #363f58;letter-spacing:0.275px;">$5.60</span>
<span class="t" id="t141" style="left:768.29px;top:740px;font-size:9.9px;color:#363f58;-webkit-text-stroke:0.12px #363f58;letter-spacing:0.550px;">25</span>
<span class="t" id="t142" style="left:861.10px;top:740px;font-size:9.9px;color:#363f58;-webkit-text-stroke:0.12px #363f58;letter-spacing:0.500px;">24</span>
<span class="t" id="t143" style="left:956.44px;top:740px;font-size:9.9px;color:#363f58;-webkit-text-stroke:0.12px #363f58;letter-spacing:0.083px;">$155.60</span>
<span class="t" id="t144" style="left:131.54px;top:774px;font-size:9.9px;color:#363f58;-webkit-text-stroke:0.12px #363f58;letter-spacing:-0.037px;">CIRCA GLASS FM..</span>
<span class="t" id="t145" style="left:236.99px;top:774px;font-size:9.9px;color:#363f58;-webkit-text-stroke:0.12px #363f58;letter-spacing:0.025px;">83.13</span>
<span class="t" id="t146" style="left:335.99px;top:774px;font-size:9.9px;color:#363f58;-webkit-text-stroke:0.12px #363f58;letter-spacing:0.025px;">83.13</span>
<span class="t" id="t147" style="left:433.94px;top:774px;font-size:9.9px;color:#363f58;-webkit-text-stroke:0.12px #363f58;letter-spacing:0.300px;">50.83</span>
<span class="t" id="t148" style="left:504.24px;top:774px;font-size:9.9px;color:#363f58;-webkit-text-stroke:0.12px #363f58;letter-spacing:-0.400px;">13</span>
<span class="t" id="t149" style="left:621.44px;top:774px;font-size:9.9px;color:#363f58;-webkit-text-stroke:0.12px #363f58;letter-spacing:0.100px;">$15.60</span>
<span class="t" id="t150" style="left:706.00px;top:774px;font-size:9.9px;color:#363f58;-webkit-text-stroke:0.12px #363f58;letter-spacing:0.275px;">$5.60</span>
<span class="t" id="t151" style="left:768.29px;top:774px;font-size:9.9px;color:#363f58;-webkit-text-stroke:0.12px #363f58;letter-spacing:0.550px;">25</span>
<span class="t" id="t152" style="left:861.10px;top:774px;font-size:9.9px;color:#363f58;-webkit-text-stroke:0.12px #363f58;letter-spacing:0.500px;">24</span>
<span class="t" id="t153" style="left:956.44px;top:774px;font-size:9.9px;color:#363f58;-webkit-text-stroke:0.12px #363f58;letter-spacing:0.083px;">$155.60</span>
<span class="t" id="t154" style="left:131.54px;top:808px;font-size:9.9px;color:#363f58;-webkit-text-stroke:0.12px #363f58;letter-spacing:-0.037px;">CIRCA GLASS FM..</span>
<span class="t" id="t155" style="left:236.99px;top:808px;font-size:9.9px;color:#363f58;-webkit-text-stroke:0.12px #363f58;letter-spacing:0.025px;">83.13</span>
<span class="t" id="t156" style="left:335.99px;top:808px;font-size:9.9px;color:#363f58;-webkit-text-stroke:0.12px #363f58;letter-spacing:0.025px;">83.13</span>
<span class="t" id="t157" style="left:433.94px;top:808px;font-size:9.9px;color:#363f58;-webkit-text-stroke:0.12px #363f58;letter-spacing:0.300px;">50.83</span>
<span class="t" id="t158" style="left:504.24px;top:808px;font-size:9.9px;color:#363f58;-webkit-text-stroke:0.12px #363f58;letter-spacing:-0.400px;">13</span>
<span class="t" id="t159" style="left:621.44px;top:808px;font-size:9.9px;color:#363f58;-webkit-text-stroke:0.12px #363f58;letter-spacing:0.100px;">$15.60</span>
<span class="t" id="t160" style="left:706.00px;top:808px;font-size:9.9px;color:#363f58;-webkit-text-stroke:0.12px #363f58;letter-spacing:0.275px;">$5.60</span>
<span class="t" id="t161" style="left:768.29px;top:808px;font-size:9.9px;color:#363f58;-webkit-text-stroke:0.12px #363f58;letter-spacing:0.550px;">25</span>
<span class="t" id="t162" style="left:861.10px;top:808px;font-size:9.9px;color:#363f58;-webkit-text-stroke:0.12px #363f58;letter-spacing:0.500px;">24</span>
<span class="t" id="t163" style="left:956.44px;top:808px;font-size:9.9px;color:#363f58;-webkit-text-stroke:0.12px #363f58;letter-spacing:0.083px;">$155.60</span>
</section>
</main>
</div>
</body>
</html>
